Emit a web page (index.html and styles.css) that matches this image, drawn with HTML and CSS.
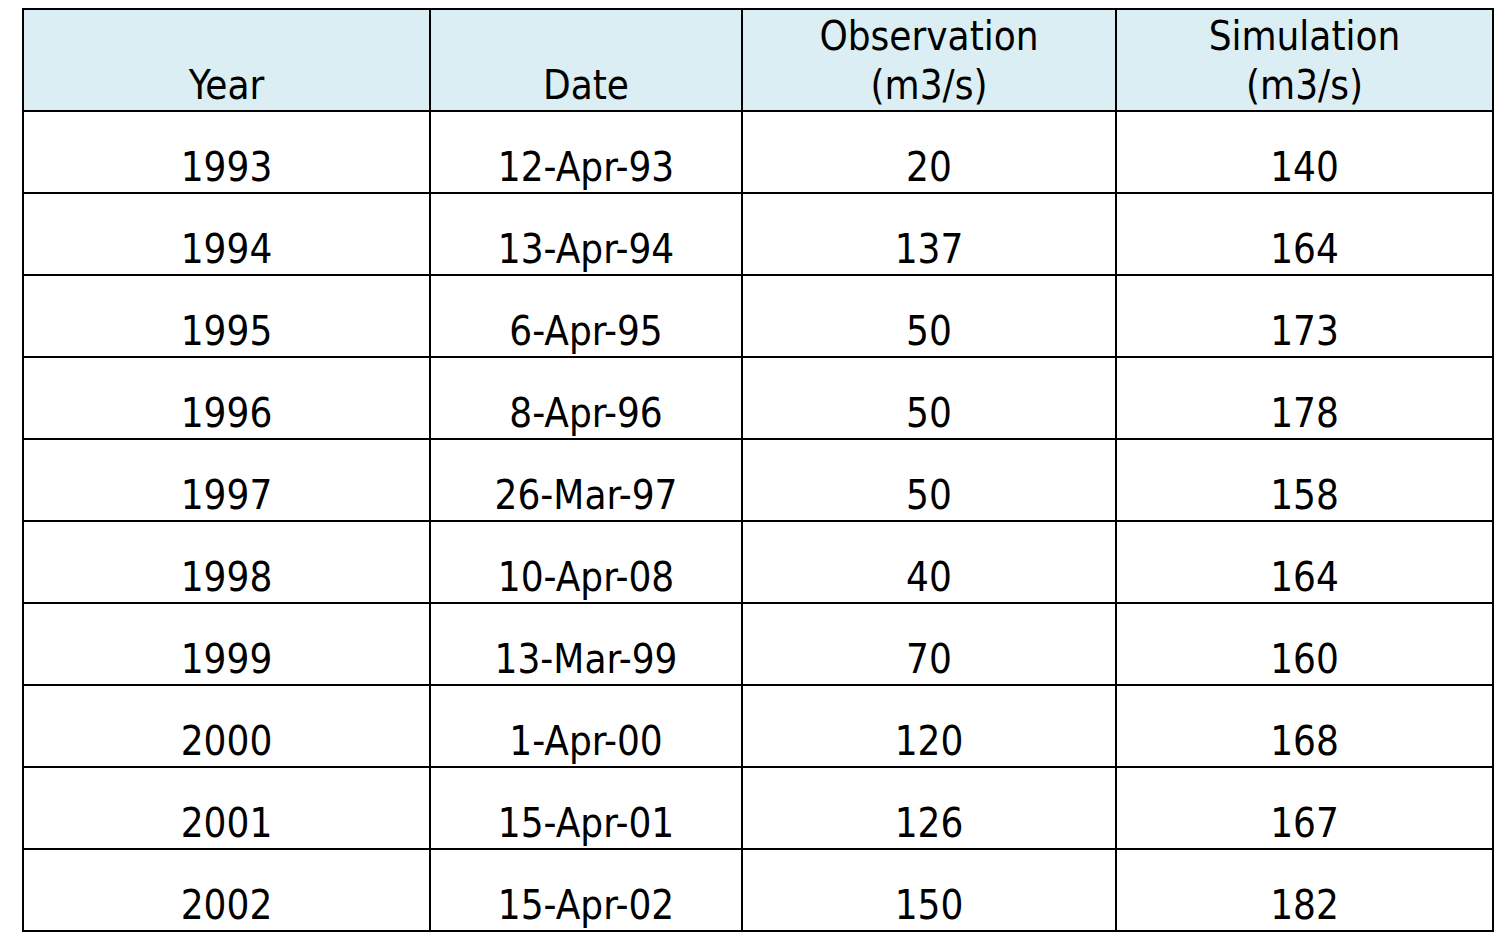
FILE: index.html
```html
<!DOCTYPE html>
<html>
<head>
<meta charset="utf-8">
<link rel="stylesheet" href="styles.css">
</head>
<body>
<div class="page">
<table class="data">
  <colgroup>
    <col class="c1"><col class="c2"><col class="c3"><col class="c4">
  </colgroup>
  <thead>
    <tr><th>Year</th><th>Date</th><th>Observation<br>(m3/s)</th><th>Simulation<br>(m3/s)</th></tr>
  </thead>
  <tbody>
    <tr><td>1993</td><td>12-Apr-93</td><td>20</td><td>140</td></tr>
    <tr><td>1994</td><td>13-Apr-94</td><td>137</td><td>164</td></tr>
    <tr><td>1995</td><td>6-Apr-95</td><td>50</td><td>173</td></tr>
    <tr><td>1996</td><td>8-Apr-96</td><td>50</td><td>178</td></tr>
    <tr><td>1997</td><td>26-Mar-97</td><td>50</td><td>158</td></tr>
    <tr><td>1998</td><td>10-Apr-08</td><td>40</td><td>164</td></tr>
    <tr><td>1999</td><td>13-Mar-99</td><td>70</td><td>160</td></tr>
    <tr><td>2000</td><td>1-Apr-00</td><td>120</td><td>168</td></tr>
    <tr><td>2001</td><td>15-Apr-01</td><td>126</td><td>167</td></tr>
    <tr><td>2002</td><td>15-Apr-02</td><td>150</td><td>182</td></tr>
  </tbody>
</table>
</div>
</body>
</html>
```

FILE: styles.css
```css
html, body {
  margin: 0;
  padding: 0;
  background: #ffffff;
}
.page {
  padding: 8px 0 0 22px;
}
.data {
  border-collapse: collapse;
  table-layout: fixed;
  width: 1470px;
  font-family: "DejaVu Sans", sans-serif;
  font-stretch: condensed;
  font-size: 40px;
  color: #000;
}
.c1 { width: 407px; }
.c2 { width: 312px; }
.c3 { width: 374px; }
.c4 { width: 377px; }
.data th, .data td {
  border: 2px solid #000;
  text-align: center;
  vertical-align: bottom;
  padding: 0;
  font-weight: normal;
  line-height: 49px;
}
.data th {
  background: #dbeef3;
  height: 100px;
}
.data td {
  height: 80px;
}
```
